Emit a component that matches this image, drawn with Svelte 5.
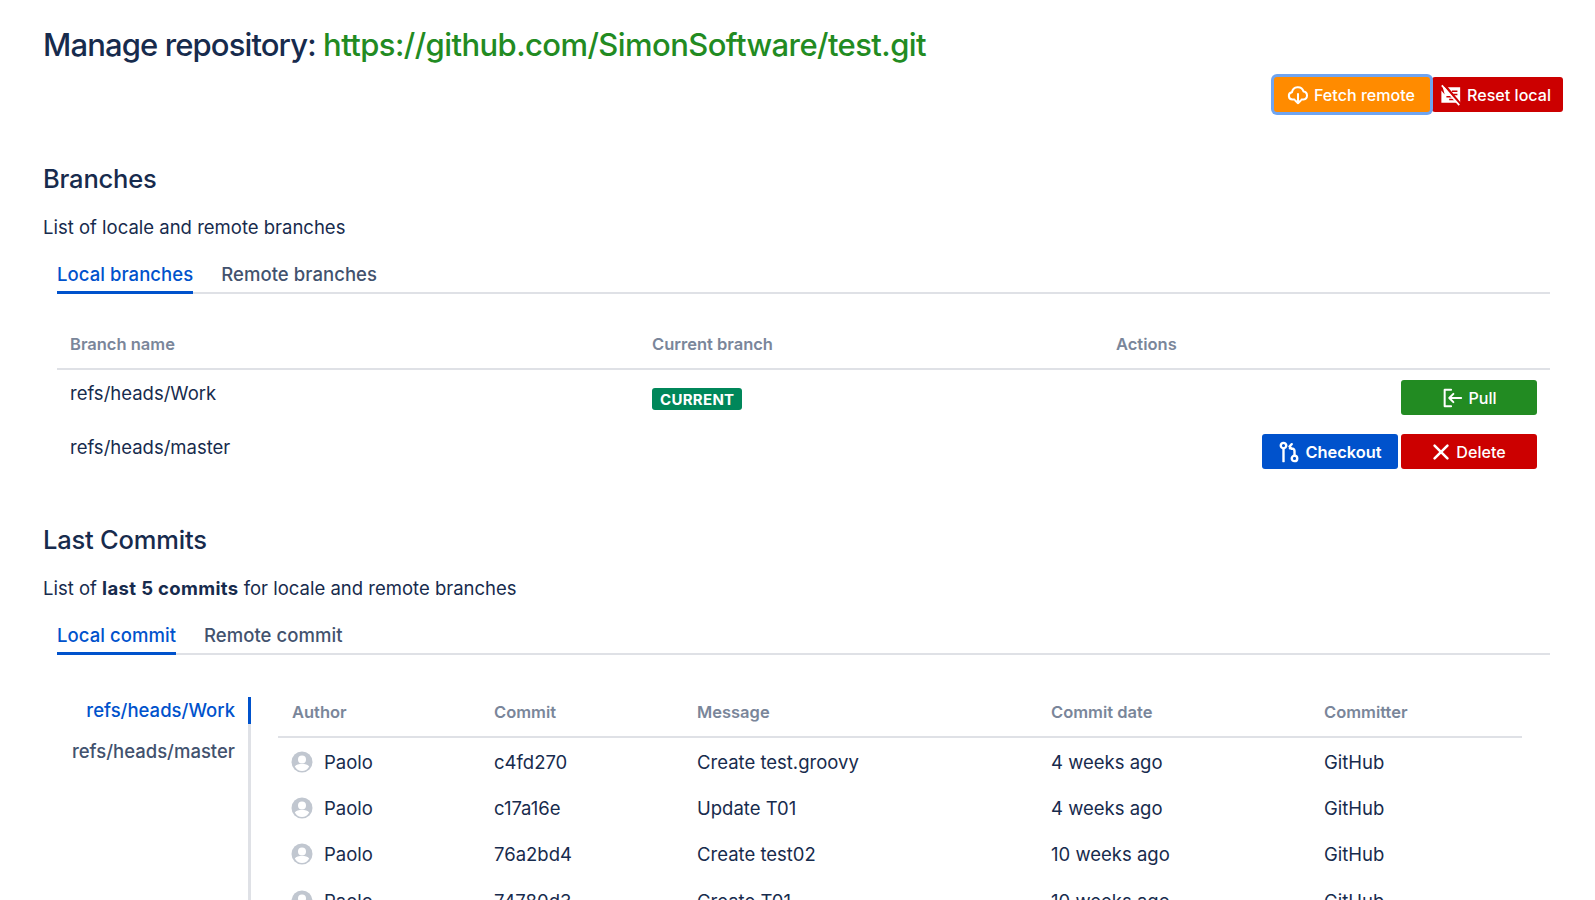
<script>
	const branches = [
		{ name: 'refs/heads/Work', current: true, actions: ['pull'] },
		{ name: 'refs/heads/master', current: false, actions: ['checkout', 'delete'] }
	];
	const commits = [
		{ hash: 'c4fd270', message: 'Create test.groovy', date: '4 weeks ago' },
		{ hash: 'c17a16e', message: 'Update T01', date: '4 weeks ago' },
		{ hash: '76a2bd4', message: 'Create test02', date: '10 weeks ago' },
		{ hash: '74780d3', message: 'Create T01', date: '10 weeks ago' }
	];
</script>

<main class="page">
	<h1>Manage repository: <span class="repo">https://github.com/SimonSoftware/test.git</span></h1>

	<div class="toolbar">
		<button class="btn orange focused">
			<svg viewBox="0 0 24 24" class="icon" fill="none" stroke="currentColor" stroke-width="2.2" stroke-linecap="round" stroke-linejoin="round">
				<path d="M8 17H6a4 4 0 0 1-.6-7.950A6.500 6.500 0 0 1 18 8.100 4.500 4.500 0 0 1 18 17h-2" />
				<path d="M12 11v10M9 18l3 3 3-3" />
			</svg>
			Fetch remote
		</button>
		<button class="btn red reset">
			<svg viewBox="0 0 24 24" class="icon">
				<path fill="currentColor" d="M3 3.500h19v17H7.500zM1.500 7l11 13.500h-11z" />
				<path fill="none" stroke="#c00" stroke-width="1.700" d="M13 8h6M14.500 11.500h4.500M7 14h8M10 17h9" />
				<path fill="none" stroke="#c00" stroke-width="2.800" d="M4 0l19 23" />
				<path fill="none" stroke="currentColor" stroke-width="1.800" d="M2 1.500 21 23" />
			</svg>
			Reset local
		</button>
	</div>

	<section class="branches">
		<h2>Branches</h2>
		<p>List of locale and remote branches</p>
		<div class="tabs">
			<span class="tab active">Local branches</span>
			<span class="tab">Remote branches</span>
		</div>
		<div class="branch-table">
			<div class="row head">
				<div>Branch name</div>
				<div>Current branch</div>
				<div>Actions</div>
			</div>
			{#each branches as branch}
				<div class="row">
					<div class="name">{branch.name}</div>
					<div>
						{#if branch.current}<span class="badge">CURRENT</span>{/if}
					</div>
					<div class="actions">
						{#each branch.actions as action}
							{#if action === 'pull'}
								<button class="btn green">
									<svg viewBox="0 0 24 24" class="icon" fill="none" stroke="currentColor" stroke-width="2.2" stroke-linecap="round" stroke-linejoin="round">
										<path d="M11 3H4v18h7M22 12H9M13.500 7.500 9 12l4.500 4.500" />
									</svg>
									Pull
								</button>
							{:else if action === 'checkout'}
								<button class="btn blue">
									<svg viewBox="0 0 24 24" class="icon" fill="none" stroke="currentColor" stroke-width="2.600" stroke-linecap="round" stroke-linejoin="round">
										<circle cx="6" cy="5" r="3" />
										<path d="M6 8v14" />
										<circle cx="18" cy="19" r="3" />
										<path d="M18 16v-5a3 3 0 0 0-3-3h-2M15 3.500 12.500 6 15 8.500" />
									</svg>
									Checkout
								</button>
							{:else}
								<button class="btn red delete">
									<svg viewBox="0 0 24 24" class="icon" fill="none" stroke="currentColor" stroke-width="2.800" stroke-linecap="round">
										<path d="M5 5l14 14M19 5 5 19" />
									</svg>
									Delete
								</button>
							{/if}
						{/each}
					</div>
				</div>
			{/each}
		</div>
	</section>

	<section class="commits">
		<h2>Last Commits</h2>
		<p>List of <strong>last 5 commits</strong> for locale and remote branches</p>
		<div class="tabs">
			<span class="tab active">Local commit</span>
			<span class="tab">Remote commit</span>
		</div>
		<div class="commit-view">
			<nav class="side-tabs">
				<span class="side-tab active">refs/heads/Work</span>
				<span class="side-tab">refs/heads/master</span>
			</nav>
			<div class="commit-table">
				<div class="commit-row head">
					<div>Author</div>
					<div>Commit</div>
					<div>Message</div>
					<div>Commit date</div>
					<div>Committer</div>
				</div>
				{#each commits as commit}
					<div class="commit-row">
						<div class="author">
							<svg viewBox="0 0 22 22" class="avatar">
								<circle cx="11" cy="11" r="10.500" fill="#c1c7d0" />
								<circle cx="11" cy="8.500" r="4" fill="#fff" />
								<path d="M3.800 15.500C5 13.500 8 13 11 13s6 .5 7.200 2.500C16.500 18.500 14 20 11 20s-5.500-1.500-7.200-4.500z" fill="#fff" />
							</svg>
							Paolo
						</div>
						<div>{commit.hash}</div>
						<div>{commit.message}</div>
						<div>{commit.date}</div>
						<div>GitHub</div>
					</div>
				{/each}
			</div>
		</div>
	</section>
</main>

<style>
	:global(body) {
		margin: 0;
		background: #fff;
		overflow: hidden;
	}
	.page {
		box-sizing: border-box;
		height: 900px;
		overflow: hidden;
		padding: 24px 32px 0 43px;
		font-family: Inter, "Liberation Sans", sans-serif;
		font-size: 18.500px;
		line-height: 24px;
		color: #172b4d;
	}
	h1 {
		margin: 0;
		font-size: 31px;
		line-height: 42px;
		font-weight: 500;
		letter-spacing: -0.880px;
	}
	.repo {
		color: #228b22;
		letter-spacing: -0.570px;
	}
	strong {
		letter-spacing: 0.350px;
	}
	.toolbar {
		display: flex;
		justify-content: flex-end;
		gap: 2px;
		margin-top: 11px;
	}
	.btn {
		display: inline-flex;
		align-items: center;
		justify-content: center;
		gap: 5px;
		height: 35px;
		border: 0;
		border-radius: 3px;
		padding: 0 12px 0 10px;
		font-family: inherit;
		font-size: 16.100px;
		font-weight: 500;
		color: #fff;
		white-space: nowrap;
	}
	.btn.reset {
		padding-left: 8px;
	}
	.icon {
		width: 22px;
		height: 22px;
		flex: none;
	}
	.orange {
		background: #ff8b00;
	}
	.focused {
		position: relative;
		z-index: 1;
		box-shadow: 0 0 0 3px #6fa5f2;
		width: 156px;
	}
	.red {
		background: #c00;
	}
	.green {
		background: #228b22;
	}
	.blue {
		background: #0052cc;
		font-weight: 600;
		font-size: 16.400px;
	}
	h2 {
		margin: 0;
		font-size: 25.500px;
		line-height: 32px;
		font-weight: 500;
		letter-spacing: -0.200px;
	}
	p {
		margin: 0;
		padding-top: 20px;
	}
	.branches {
		margin-top: 51px;
	}
	.commits {
		margin-top: 36px;
	}
	.tabs {
		display: flex;
		gap: 28px;
		margin: 23px 13px 0 14px;
		border-bottom: 2px solid #dfe1e6;
	}
	.tab {
		padding-bottom: 5px;
		margin-bottom: -2px;
		font-weight: 500;
		letter-spacing: 0.060px;
		color: #42526e;
		border-bottom: 3px solid transparent;
	}
	.tab.active {
		color: #0052cc;
		border-bottom-color: #0052cc;
	}
	.branch-table {
		margin: 38px 13px 0 14px;
	}
	.row {
		display: grid;
		grid-template-columns: 582px 464px 1fr;
		padding: 0 13px;
		min-height: 54px;
	}
	.row > div {
		min-width: 0;
	}
	.row.head {
		min-height: 0;
		padding-bottom: 12px;
		margin-bottom: 10px;
		border-bottom: 2px solid #dfe1e6;
	}
	.head {
		font-size: 16.500px;
		font-weight: 600;
		color: #7a869a;
	}
	.name {
		padding-top: 1px;
	}
	.badge {
		display: inline-block;
		margin-top: 8px;
		padding: 0 8px;
		height: 22px;
		line-height: 23px;
		border-radius: 3px;
		background: #00875a;
		color: #fff;
		font-size: 15px;
		font-weight: 700;
		letter-spacing: 0.300px;
		vertical-align: top;
	}
	.actions {
		display: flex;
		justify-content: flex-end;
		gap: 3px;
	}
	.actions .btn {
		width: 136px;
		padding: 0;
	}
	.actions .delete {
		padding-right: 2px;
		gap: 4px;
	}
	.commit-view {
		display: flex;
		margin: 42px 13px 0 14px;
	}
	.side-tabs {
		box-sizing: border-box;
		display: flex;
		flex-direction: column;
		align-items: flex-end;
		width: 194px;
		height: 240px;
		border-right: 3px solid #dfe1e6;
	}
	.side-tab {
		height: 27px;
		line-height: 27px;
		margin-right: -3px;
		padding-right: 13px;
		margin-bottom: 14px;
		font-weight: 500;
		color: #42526e;
		border-right: 3px solid transparent;
	}
	.side-tab.active {
		color: #0052cc;
		border-right-color: #0052cc;
	}
	.commit-table {
		margin-left: 27px;
		width: 1244px;
		padding-top: 3px;
	}
	.commit-row {
		display: grid;
		grid-template-columns: 202px 203px 354px 273px 1fr;
		align-items: center;
		height: 46.300px;
		padding-left: 14px;
	}
	.commit-row.head {
		height: auto;
		padding-bottom: 12px;
		margin-bottom: 0.500px;
		border-bottom: 2px solid #dfe1e6;
	}
	.author {
		display: flex;
		align-items: center;
		gap: 11px;
		margin-left: -1px;
	}
	.avatar {
		width: 22px;
		height: 22px;
	}
</style>
